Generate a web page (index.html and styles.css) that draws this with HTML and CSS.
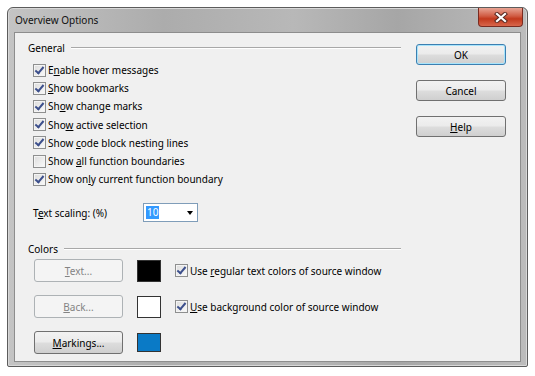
FILE: index.html
```html
<!DOCTYPE html>
<html>
<head>
	<title>Overview Options</title>
	<link rel="stylesheet" href="styles.css">
</head>
<body>
	<div class="window">
		<div class="titlebar">
			<span class="title">Overview Options</span>
			<span class="close">
				<svg width="14" height="11" viewBox="0 0 14 11"><path d="M3 2 L11 9 M11 2 L3 9" stroke="#5a2a22" stroke-width="4.2" stroke-linecap="square"/><path d="M3 2 L11 9 M11 2 L3 9" stroke="#fff" stroke-width="2.2" stroke-linecap="square"/></svg>
			</span>
		</div>
		<div class="client">
			<div class="main">
				<div class="group-head"><span>General</span><div class="rule"></div></div>
				<div class="checks">
					<label class="check"><span class="box on"></span><span>E<u>n</u>able hover messages</span></label>
					<label class="check"><span class="box on"></span><span><u>S</u>how bookmarks</span></label>
					<label class="check"><span class="box on"></span><span>Sh<u>o</u>w change marks</span></label>
					<label class="check"><span class="box on"></span><span>Sho<u>w</u> active selection</span></label>
					<label class="check"><span class="box on"></span><span>Show <u>c</u>ode block nesting lines</span></label>
					<label class="check"><span class="box"></span><span>Show <u>a</u>ll function boundaries</span></label>
					<label class="check"><span class="box on"></span><span>Show on<u>l</u>y current function boundary</span></label>
				</div>
				<div class="scaling">
					<span class="scaling-label">T<u>e</u>xt scaling: (%)</span>
					<div class="combo"><span class="sel">10</span><span class="arrow"></span></div>
				</div>
				<div class="group-head colors-head"><span>Colors</span><div class="rule"></div></div>
				<div class="color-row">
					<button class="btn wide" disabled><u>T</u>ext...</button>
					<span class="swatch black"></span>
					<label class="check"><span class="box on"></span><span>Use <u>r</u>egular text colors of source window</span></label>
				</div>
				<div class="color-row">
					<button class="btn wide" disabled><u>B</u>ack...</button>
					<span class="swatch white"></span>
					<label class="check"><span class="box on"></span><span><u>U</u>se background color of source window</span></label>
				</div>
				<div class="color-row">
					<button class="btn wide"><u>M</u>arkings...</button>
					<span class="swatch blue"></span>
				</div>
			</div>
			<div class="side">
				<button class="btn default">OK</button>
				<button class="btn">Cancel</button>
				<button class="btn"><u>H</u>elp</button>
			</div>
		</div>
	</div>
</body>
</html>
```
FILE: styles.css
```css
body {
	margin: 0;
	background: #fff;
	font-family: "Noto Sans", sans-serif;
	font-size: 10px;
	color: #000;
}
.window {
	margin: 7px 0 0 7px;
	width: 507px;
	height: 353px;
	padding: 0 6px 5px 6px;
	border: 1px solid #5c5c5c;
	border-radius: 6px 6px 2px 2px;
	background: linear-gradient(90deg, #c4c4c4 0%, #acacac 30%, #b8b8b8 55%, #a6a6a6 75%, #bcbcbc 100%);
	box-shadow: inset 0 0 0 1px #d8d8d8;
}
.titlebar {
	height: 24px;
	display: flex;
	align-items: center;
	justify-content: space-between;
}
.title {
	padding-left: 1px;
	font-size: 10px;
	color: #111;
}
.close {
	width: 43px;
	height: 18px;
	margin-top: -5px;
	margin-right: -2px;
	display: flex;
	align-items: center;
	justify-content: center;
	border: 1px solid #7a2b20;
	border-top: none;
	border-radius: 0 0 4px 4px;
	background: linear-gradient(180deg, #e8a494 0%, #d05b43 45%, #c2391d 60%, #d8664b 100%);
}
.client {
	height: 328px;
	display: flex;
	background: #f0f0f0;
	border: 1px solid #8d8d8d;
}
.main {
	width: 400px;
	box-sizing: border-box;
	padding: 8px 14px 0 13px;
}
.group-head {
	display: flex;
	align-items: center;
	gap: 6px;
}
.rule {
	flex: 1;
	border-top: 1px solid #a8a8a8;
	border-bottom: 1px solid #fff;
}
.checks {
	padding: 6px 0 0 5px;
}
.check {
	display: flex;
	align-items: center;
	height: 18.2px;
	gap: 2px;
	white-space: nowrap;
}
.box {
	width: 11px;
	height: 11px;
	flex: none;
	border: 1px solid #8e8f8f;
	background: linear-gradient(135deg, #dcdcdc, #fafafa);
	box-shadow: inset 0 0 0 1px #f4f4f4;
	position: relative;
}
.box.on::after {
	content: "";
	position: absolute;
	left: 3px;
	top: 0px;
	width: 3px;
	height: 7px;
	border: solid #3c4f8c;
	border-width: 0 2px 2px 0;
	transform: rotate(40deg);
}
.scaling {
	display: flex;
	align-items: center;
	margin: 15px 0 0 5px;
}
.scaling-label {
	width: 110px;
}
.combo {
	width: 47px;
	height: 17px;
	border: 1px solid #7f9db9;
	background: #fff;
	display: flex;
	align-items: center;
	justify-content: space-between;
	padding: 0 4px 0 2px;
}
.sel {
	background: #3399ff;
	color: #fff;
	padding: 0 1px;
	line-height: 13px;
}
.arrow {
	border-left: 3px solid transparent;
	border-right: 3px solid transparent;
	border-top: 4px solid #000;
}
.colors-head {
	margin-top: 20px;
}
.color-row {
	display: flex;
	align-items: center;
	height: 23px;
	margin: 0 0 13px 6px;
}
.colors-head + .color-row {
	margin-top: 3px;
}
.btn {
	font-family: "Noto Sans", sans-serif;
	font-size: 10px;
	height: 23px;
	border: 1px solid #707070;
	border-radius: 3px;
	background: linear-gradient(180deg, #f2f2f2 0%, #ebebeb 48%, #dddddd 52%, #cfcfcf 100%);
	color: #000;
	padding: 0;
}
.btn:disabled {
	border-color: #adb2b5;
	background: #f4f4f4;
	color: #838383;
}
.wide {
	width: 89px;
	margin-right: 14px;
}
.swatch {
	width: 22px;
	height: 20px;
	flex: none;
	border: 1px solid #333;
	margin-right: 14px;
}
.black {
	background: #000;
}
.white {
	background: #fff;
}
.blue {
	background: #0a7ac6;
	height: 17px;
}
.side {
	flex: 1;
	display: flex;
	flex-direction: column;
	align-items: flex-start;
	gap: 15px;
	padding: 11px 0 0 1px;
}
.side .btn {
	width: 90px;
	height: 21px;
}
.default {
	border-color: #3c7fb1;
	box-shadow: inset 0 0 0 1px #a8e4fb;
}
```
